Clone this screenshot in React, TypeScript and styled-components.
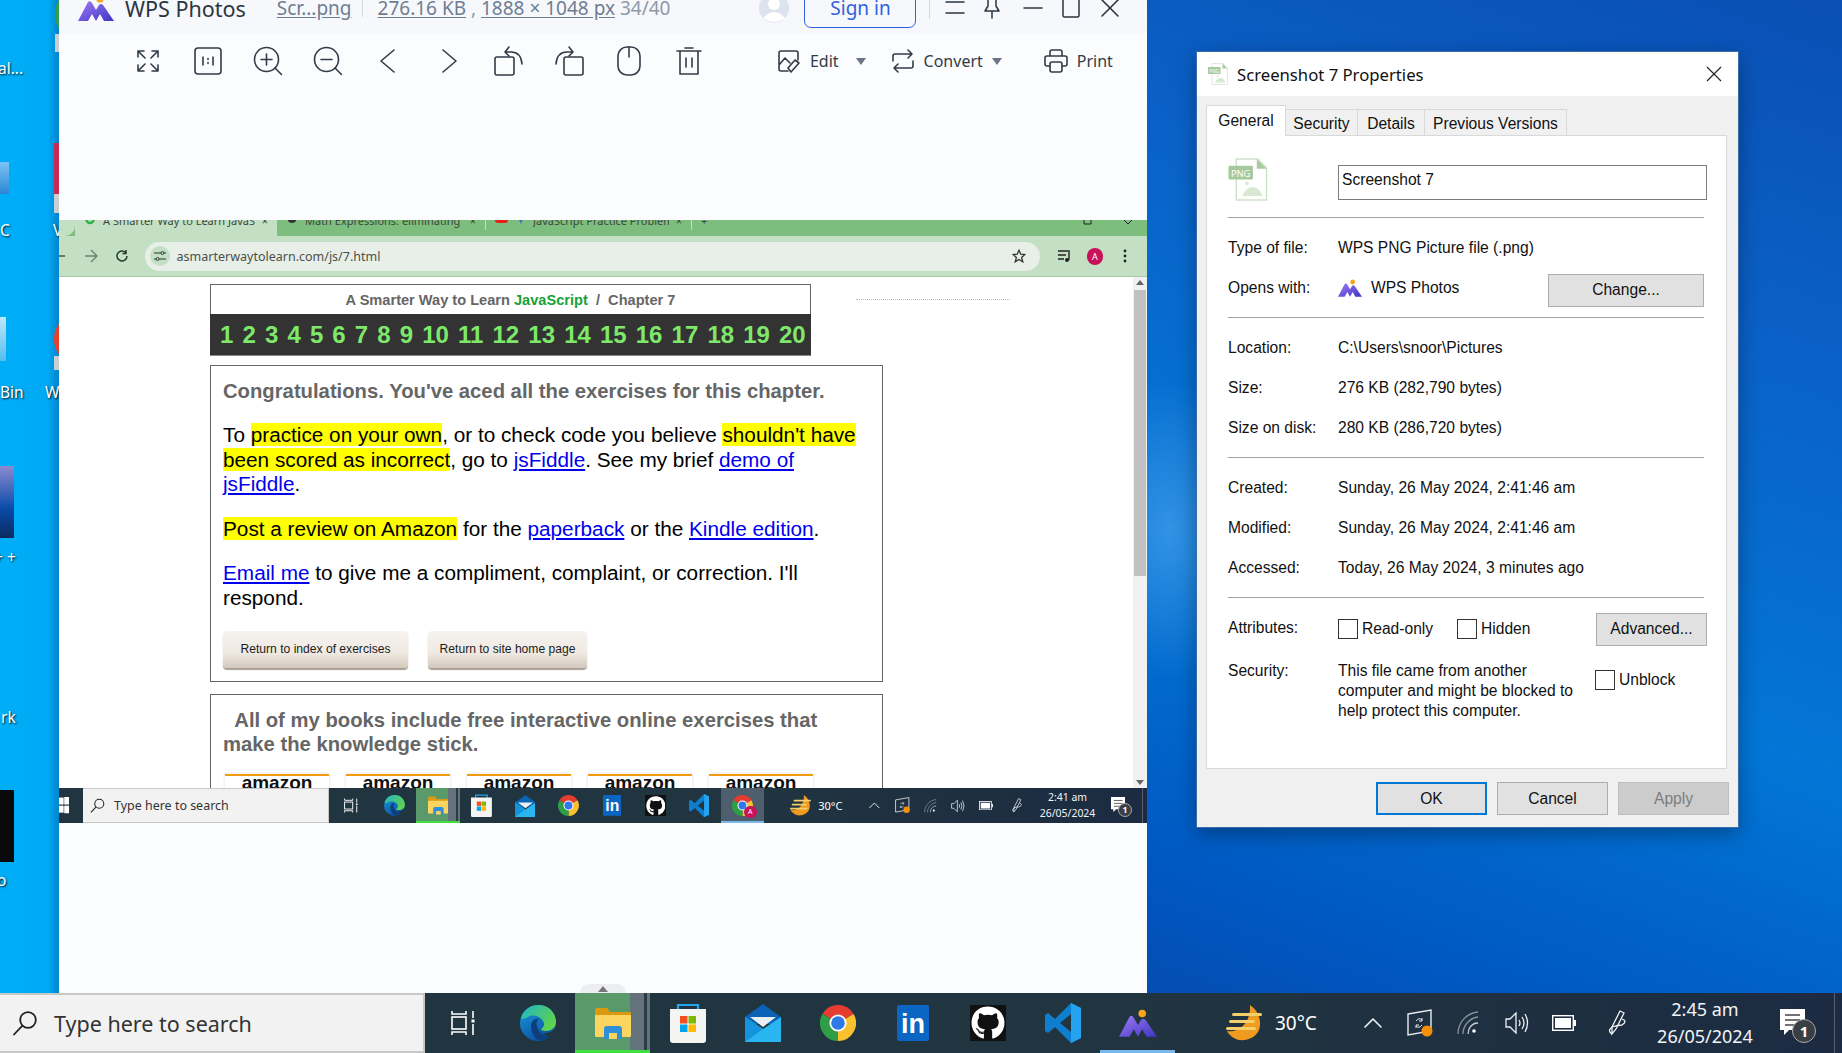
import React from "react";
import styled, { createGlobalStyle } from "styled-components";
import { FaGithub } from "react-icons/fa";

const GlobalStyle = createGlobalStyle`
  html, body { margin: 0; padding: 0; overflow: hidden; }
  * { box-sizing: border-box; }
`;

const Desktop = styled.div`
  position: relative;
  width: 1842px;
  height: 1053px;
  overflow: hidden;
  display: flex;
  flex-direction: column;
  justify-content: flex-end;
  background:
    radial-gradient(ellipse 90px 150px at 1170px 530px, rgba(90, 170, 240, 0.55), transparent),
    linear-gradient(200deg, #0a4fb4 0%, #0a62c8 30%, #0276d6 60%, #0058c2 85%, #0648ac 100%) 1147px 0 / 695px 100% no-repeat,
    linear-gradient(90deg, #00aef8 0, #00a9f3 48px, #0083cc 59px);
`;

/* ---------- desktop shortcuts cut off by the viewer ---------- */

const Shortcut = styled.span<{ $x: number; $y: number }>`
  position: absolute;
  left: ${(p) => p.$x}px;
  top: ${(p) => p.$y}px;
  font: 15.5px "Noto Sans", sans-serif;
  line-height: 18px;
  color: #fff;
  text-shadow: 1px 1px 2px #111;
  white-space: nowrap;
`;

const ShortcutArt = styled.div<{ $x: number; $y: number; $w: number; $h: number; $bg: string; $round?: boolean }>`
  position: absolute;
  left: ${(p) => p.$x}px;
  top: ${(p) => p.$y}px;
  width: ${(p) => p.$w}px;
  height: ${(p) => p.$h}px;
  background: ${(p) => p.$bg};
  border-radius: ${(p) => (p.$round ? "50%" : "0")};
`;

/* ---------- WPS Photos window ---------- */

const Viewer = styled.section`
  position: absolute;
  left: 59px;
  top: -25px;
  width: 1088px;
  height: 1018px;
  background: #fbfcfe;
  display: flex;
  flex-direction: column;
  font-family: "Noto Sans", sans-serif;
`;

const ViewerHeader = styled.header`
  height: 58px;
  padding-top: 8px;
  padding-left: 19px;
  background: #f6f8fb;
  display: flex;
  align-items: center;
  flex-shrink: 0;
  color: #2b3442;
`;

const AppName = styled.span`
  margin: 0 31px 0 11px;
  font-size: 21.5px;
  white-space: nowrap;
`;

const MetaLink = styled.span`
  font-size: 19px;
  color: #6f7d92;
  text-decoration: underline;
  text-underline-offset: 2px;
  white-space: nowrap;
`;

const MetaPlain = styled.span`
  font-size: 19px;
  color: #8e99a9;
  white-space: nowrap;
`;

const MetaRule = styled.span`
  width: 1px;
  height: 18px;
  background: #d5dae2;
  margin: 0 15px 0 10px;
`;

const Avatar = styled.svg`
  margin-left: 89px;
`;

const SignIn = styled.button`
  width: 112px;
  height: 40px;
  margin: 0 13px 0 15px;
  border: 1px solid #2f62e0;
  border-radius: 7px;
  background: transparent;
  color: #2f62e0;
  font: 19px "Noto Sans", sans-serif;
  padding: 0;
`;

const HeaderRule = styled.span`
  width: 1px;
  height: 22px;
  background: #d5dae2;
  margin-right: 10px;
`;

const WindowGlyph = styled.span<{ $w: number }>`
  width: ${(p) => p.$w}px;
  display: flex;
  justify-content: center;
`;

const ViewerTools = styled.div`
  height: 187px;
  padding-top: 8px;
  display: flex;
  align-items: flex-start;
  flex-shrink: 0;
`;

const ToolRow = styled.div`
  height: 40px;
  padding-left: 59px;
  display: flex;
  align-items: center;
`;

const ToolSlot = styled.span`
  width: 60.1px;
  display: flex;
  justify-content: center;
  color: #333b47;
`;

const LabelTool = styled.span<{ $left: number }>`
  margin-left: ${(p) => p.$left}px;
  display: flex;
  align-items: center;
  gap: 9px;
  font-size: 16px;
  color: #333b47;
`;

const Caret = styled.span<{ $gap: number }>`
  width: 0;
  height: 0;
  margin-left: ${(p) => p.$gap}px;
  border-left: 5px solid transparent;
  border-right: 5px solid transparent;
  border-top: 7px solid #6c7684;
`;

const Handle = styled.div`
  position: absolute;
  left: 521px;
  bottom: 0;
  width: 46px;
  height: 9px;
  border-radius: 12px 12px 0 0;
  background: #eceef2;
  display: flex;
  justify-content: center;
  padding-top: 2px;
`;

/* ---------- the Chrome screenshot inside the viewer ---------- */

const Shot = styled.div`
  height: 603px;
  display: flex;
  flex-direction: column;
  flex-shrink: 0;
  overflow: hidden;
  font-family: "Liberation Sans", Arial, sans-serif;
`;

const TabStrip = styled.div`
  height: 16px;
  background: #7dbd7d;
  display: flex;
  overflow: hidden;
  flex-shrink: 0;
  font: 11px "Noto Sans", sans-serif;
  color: #3c4a3c;
`;

const BrowserTab = styled.div<{ $w: number; $active?: boolean }>`
  width: ${(p) => p.$w}px;
  height: 16px;
  display: flex;
  align-items: center;
  gap: 7px;
  padding: 0 9px 16px;
  white-space: nowrap;
  background: ${(p) => (p.$active ? "#c4e0c4" : "transparent")};
  flex-shrink: 0;
`;

const TabTitle = styled.span`
  flex: 1;
  overflow: hidden;
`;

const TabEdge = styled.span`
  width: 16px;
  height: 16px;
  flex-shrink: 0;
  background: #c4e0c4;
  border-radius: 0 0 10px 0;
`;

const TabRule = styled.span`
  width: 1px;
  height: 10px;
  background: #c4e0c4;
  flex-shrink: 0;
`;

const StripControls = styled.div`
  margin-left: auto;
  display: flex;
  gap: 30px;
  padding-right: 14px;
  align-items: flex-start;
`;

const BrowserBar = styled.div`
  height: 41px;
  background: #c4e0c4;
  border-bottom: 1px solid #a9c6a9;
  display: flex;
  align-items: center;
  flex-shrink: 0;
  color: #2c3a2c;
`;

const NavIcon = styled.span<{ $w: number }>`
  width: ${(p) => p.$w}px;
  display: flex;
  justify-content: center;
`;

const Omnibox = styled.div`
  width: 903px;
  height: 29px;
  margin: 0 3px 0 16px;
  border-radius: 15px;
  background: #e8efe8;
  display: flex;
  align-items: center;
  padding: 0 14px 0 5px;
`;

const TuneChip = styled.span`
  width: 20px;
  height: 20px;
  border-radius: 50%;
  background: #c4e0c4;
  display: flex;
  align-items: center;
  justify-content: center;
`;

const UrlText = styled.span`
  margin-left: 7px;
  font: 12.5px "Noto Sans", sans-serif;
  color: #4a4f4a;
  flex: 1;
`;

const ProfileDot = styled.span`
  width: 17px;
  height: 17px;
  border-radius: 50%;
  background: #c9105a;
  color: #fff;
  font: 9px "Noto Sans", sans-serif;
  display: flex;
  align-items: center;
  justify-content: center;
`;

const PageArea = styled.div`
  flex: 1;
  min-height: 0;
  display: flex;
  background: #fff;
  overflow: hidden;
`;

const PageColumn = styled.main`
  width: 673px;
  margin-left: 151px;
  padding-top: 7px;
  flex-shrink: 0;
`;

const ChapterHead = styled.div`
  width: 601px;
  border: 1px solid #666;
  border-bottom: 0;
  height: 30px;
  font-size: 14.6px;
  font-weight: bold;
  color: #666;
  display: flex;
  align-items: center;
  justify-content: center;
  white-space: pre;
`;

const GreenWord = styled.span`
  color: #16a23a;
`;

const ChapterNumbers = styled.nav`
  width: 601px;
  height: 42px;
  background: #333;
  border-bottom: 1px solid #888;
  color: #7ee86a;
  font-size: 24px;
  font-weight: bold;
  display: flex;
  align-items: center;
  justify-content: space-between;
  padding: 0 5px 0 10px;
`;

const PageCard = styled.div`
  border: 1px solid #666;
  padding: 13px 14px 0 12px;
  margin-top: 9px;
  color: #000;
  font-size: 20.75px;
  line-height: 24.3px;
  & + & {
    margin-top: 12px;
  }
`;

const CardHeading = styled.h2`
  margin: 0;
  font-size: 20.25px;
  line-height: 24px;
  color: #666;
  font-weight: bold;
`;

const CardText = styled.p`
  margin: 20.4px 0 0;
`;

const Marked = styled.mark`
  background: #ffff00;
  color: #000;
`;

const PageLink = styled.a`
  color: #0000ee;
  text-decoration: underline;
`;

const PageButtons = styled.div`
  display: flex;
  gap: 20px;
  margin-top: 21px;
  padding-bottom: 13px;
`;

const PageButton = styled.button<{ $w: number }>`
  width: ${(p) => p.$w}px;
  height: 37px;
  padding: 0;
  border: 0;
  border-radius: 4px;
  background: linear-gradient(#f6f3ef, #efe9e2 60%, #d2c8bc);
  box-shadow: 0 2px 1px #a89f94;
  font: 12.1px "Liberation Sans", Arial, sans-serif;
  color: #1c1c1c;
`;

const BookRow = styled.div`
  display: flex;
  gap: 17px;
  margin-top: 18px;
  margin-left: 2px;
`;

const BookLabel = styled.div`
  width: 104px;
  height: 60px;
  border-top: 2px solid #f39c12;
  background: #fff;
  box-shadow: 0 0 3px #ddd;
  text-align: center;
  font-size: 19px;
  font-weight: bold;
  line-height: 14px;
  color: #111;
`;

const DottedAd = styled.div`
  width: 154px;
  height: 0;
  margin: 22px 0 0 -27px;
  border-top: 1px dotted #bbb;
`;

const PageScroll = styled.div`
  margin-left: auto;
  width: 14px;
  background: #f1f1f1;
  display: flex;
  flex-direction: column;
  align-items: center;
  justify-content: space-between;
  padding: 3px 0;
  position: relative;
`;

const ScrollThumb = styled.div`
  position: absolute;
  top: 13px;
  left: 1px;
  width: 12px;
  height: 286px;
  background: #c1c1c1;
`;

/* ---------- taskbar, also used at a smaller size inside the screenshot ---------- */

const Bar = styled.div<{ $compact?: boolean }>`
  height: 60px;
  flex-shrink: 0;
  display: flex;
  align-items: stretch;
  background: linear-gradient(90deg, #213540, #213540 60%, #1c2b42);
  font-family: "Noto Sans", sans-serif;
  color: #fff;
  position: relative;
  zoom: ${(p) => (p.$compact ? 0.58 : 1)};
`;

const StartSlot = styled.div`
  width: 41px;
  display: flex;
  align-items: center;
`;

const SearchBox = styled.div`
  width: 425px;
  background: #f2f2f2;
  border: 1px solid #c8c8c8;
  border-width: 2px 2px 2px 0;
  display: flex;
  align-items: center;
  gap: 16px;
  padding-left: 12px;
  color: #333;
  font-size: 21.5px;
`;

const Slot = styled.div<{ $state?: "explorer" | "active" | "activeTile" }>`
  width: 75px;
  display: flex;
  align-items: center;
  justify-content: center;
  position: relative;
  background: ${(p) =>
    p.$state === "explorer"
      ? "linear-gradient(90deg, #5a9a6a 0 55px, #64727c 55px 69px, #2a3b46 69px 72px, #64727c 72px)"
      : p.$state === "activeTile"
      ? "#4d5f6c"
      : "transparent"};
  &::after {
    content: "";
    display: ${(p) => (p.$state ? "block" : "none")};
    position: absolute;
    left: 0;
    right: 0;
    bottom: 0;
    height: 3px;
    background: ${(p) => (p.$state === "explorer" ? "#3ee03e" : "#78b8ea")};
  }
`;

const ProfileBadge = styled.span`
  position: absolute;
  left: 40px;
  top: 30px;
  width: 22px;
  height: 22px;
  border-radius: 50%;
  background: #c9105a;
  color: #fff;
  font-size: 12px;
  line-height: 22px;
  text-align: center;
`;

const Tray = styled.div`
  margin-left: auto;
  display: flex;
  align-items: center;
`;

const TrayCell = styled.div<{ $w: number }>`
  width: ${(p) => p.$w}px;
  display: flex;
  align-items: center;
  justify-content: center;
  position: relative;
`;

const WeatherCell = styled.div`
  width: 128px;
  padding-left: 4px;
  display: flex;
  align-items: center;
`;

const Temperature = styled.span`
  font-size: 19px;
  margin-left: 13px;
`;

const Clock = styled.div`
  font-size: 18px;
  line-height: 27px;
  text-align: center;
  white-space: nowrap;
  color: #f2f4f6;
`;

const Badge = styled.span`
  position: absolute;
  left: 30px;
  top: 10px;
  width: 24px;
  height: 24px;
  border-radius: 50%;
  background: #3a3f44;
  border: 1px solid #aaa;
  font-size: 15px;
  line-height: 22px;
  text-align: center;
  font-weight: bold;
`;

const BarEnd = styled.div`
  width: 20px;
  align-self: stretch;
  position: relative;
  &::after {
    content: "";
    position: absolute;
    left: 12px;
    top: 0;
    bottom: 0;
    width: 1px;
    background: #556170;
  }
`;

/* ---------- properties dialog ---------- */

const Dialog = styled.section`
  position: absolute;
  left: 1197px;
  top: 52px;
  width: 541px;
  height: 775px;
  background: #f0f0f0;
  box-shadow: 0 0 0 1px #3a6ea8, 0 6px 20px rgba(0, 0, 0, 0.35);
  display: flex;
  flex-direction: column;
  font-family: "Liberation Sans", Arial, sans-serif;
  font-size: 15.6px;
  color: #111;
`;

const DialogTitle = styled.header`
  height: 44px;
  flex-shrink: 0;
  background: #fff;
  display: flex;
  align-items: center;
  padding: 0 16px 0 11px;
  gap: 9px;
  font: 16.7px "Noto Sans", sans-serif;
`;

const CloseBox = styled.span`
  margin-left: auto;
  display: flex;
`;

const DialogBody = styled.div`
  padding: 10px 9px 0 9px;
  flex: 1;
  display: flex;
  flex-direction: column;
`;

const TabRow = styled.div`
  display: flex;
  align-items: flex-end;
  height: 30px;
  position: relative;
  z-index: 1;
  margin-bottom: -1px;
`;

const PropTab = styled.div<{ $w: number; $active?: boolean }>`
  width: ${(p) => p.$w}px;
  height: ${(p) => (p.$active ? 31 : 27)}px;
  border: 1px solid #d9d9d9;
  border-left-width: ${(p) => (p.$active ? 1 : 0)}px;
  border-bottom: ${(p) => (p.$active ? "0" : "1px solid #d9d9d9")};
  background: ${(p) => (p.$active ? "#fff" : "#f0f0f0")};
  display: flex;
  align-items: center;
  justify-content: center;
  padding: ${(p) => (p.$active ? "0 0 1px" : "2px 0 0")};
  flex-shrink: 0;
  white-space: nowrap;
`;

const PropPanel = styled.div`
  width: 521px;
  height: 634px;
  background: #fff;
  border: 1px solid #d9d9d9;
  padding: 0 22px 0 21px;
`;

const PanelTop = styled.div`
  height: 81px;
  display: flex;
  align-items: flex-start;
  padding-top: 22px;
`;

const NameInput = styled.div`
  margin: 7px -3px 0 70px;
  flex: 1;
  height: 35px;
  border: 1px solid #7a7a7a;
  padding: 5px 3px;
  line-height: 18px;
`;

const Rule = styled.hr`
  margin: 0;
  border: 0;
  border-top: 1px solid #a0a0a0;
`;

const Group = styled.div`
  padding: 9px 0 10px;
`;

const Row = styled.div`
  height: 40px;
  padding-top: 2px;
  display: flex;
  align-items: center;
`;

const RowLabel = styled.span`
  width: 110px;
  flex-shrink: 0;
`;

const OpensWith = styled.span`
  display: flex;
  align-items: center;
  gap: 9px;
`;

const DlgButton = styled.button<{ $w: number; $kind?: "default" | "disabled" }>`
  width: ${(p) => p.$w}px;
  height: 33px;
  padding: 0;
  font: 15.6px "Liberation Sans", Arial, sans-serif;
  color: ${(p) => (p.$kind === "disabled" ? "#7d7d7d" : "#111")};
  background: ${(p) => (p.$kind === "disabled" ? "#cccccc" : "#e1e1e1")};
  border: ${(p) =>
    p.$kind === "default"
      ? "2px solid #0078d7"
      : p.$kind === "disabled"
      ? "1px solid #bfbfbf"
      : "1px solid #adadad"};
`;

const ChangeSlot = styled.div`
  margin-left: auto;
  margin-top: 4px;
`;

const CheckLine = styled.label<{ $w?: number }>`
  display: flex;
  align-items: center;
  gap: 4px;
  width: ${(p) => (p.$w ? `${p.$w}px` : "auto")};
  margin-top: 2px;
`;

const CheckSquare = styled.span`
  width: 20px;
  height: 20px;
  background: #fff;
  border: 1px solid #333;
  flex-shrink: 0;
`;

const AdvancedSlot = styled.div`
  margin: 2px -3px 0 auto;
`;

const SecurityRow = styled.div`
  display: flex;
  margin-top: 14px;
  line-height: 20px;
`;

const SecurityNote = styled.div`
  width: 243px;
`;

const UnblockSlot = styled.div`
  margin: 7px 0 0 14px;
`;

const DialogFooter = styled.footer`
  height: 57px;
  display: flex;
  justify-content: flex-end;
  gap: 10px;
  padding-top: 13px;
  flex-shrink: 0;
`;

/* ---------- drawn icons ---------- */

const Line: React.FC<{ size?: number; w?: number; h?: number; sw?: number; children: React.ReactNode }> = ({
  size = 30,
  w,
  h,
  sw = 1.6,
  children,
}) => (
  <svg width={w ?? size} height={h ?? size} viewBox={`0 0 ${w ?? size} ${h ?? size}`} fill="none" stroke="currentColor" strokeWidth={sw} strokeLinecap="round" strokeLinejoin="round">
    {children}
  </svg>
);

const WpsLogo = ({ w = 36, h = 26 }: { w?: number; h?: number }) => (
  <svg width={w} height={h} viewBox="0 0 36 26">
    <defs>
      <linearGradient id="wpsm" x1="0" y1="0" x2="1" y2="1">
        <stop offset="0" stopColor="#a07cf5" />
        <stop offset="1" stopColor="#3e34c4" />
      </linearGradient>
    </defs>
    <circle cx="22" cy="4" r="3.6" fill="#f9a51a" />
    <path d="M0 26 L10 7 Q12 5 14 8 L18 15 L21 10 Q23 8 25 10 L36 26 H26 L22 19 L18 26 L14 19 L10 26Z" fill="url(#wpsm)" />
  </svg>
);

const PngFile = ({ w, h }: { w: number; h: number }) => (
  <svg width={w} height={h} viewBox="0 0 40 44">
    <path d="M8 1 H30 L39 10 V43 H8Z" fill="#fff" stroke="#cfe2cb" strokeWidth="1.4" />
    <path d="M29 1 L39 11 H29Z" fill="#a9cba2" />
    <path d="M14 39 Q18 30 24 30 Q31 29 35 39Z" fill="#d7e9d3" />
    <circle cx="19" cy="26" r="2" fill="#dcebd8" />
    <rect x="0" y="8" width="25" height="14" rx="1" fill="#a5c99d" />
    <text x="12.5" y="19" textAnchor="middle" fontSize="9.5" fill="#fff" fontFamily="Noto Sans, sans-serif">PNG</text>
  </svg>
);

const SearchGlyph = ({ size = 26 }: { size?: number }) => (
  <svg width={size} height={size} viewBox="0 0 26 26" fill="none" stroke="#222" strokeWidth="1.8">
    <circle cx="16" cy="10" r="7.8" />
    <path d="M10.2 15.8 L2 24.5" strokeLinecap="round" />
  </svg>
);

const TaskView = () => (
  <svg width="24" height="26" viewBox="0 0 24 26" fill="none" stroke="#fff" strokeWidth="1.6">
    <path d="M1 1 V4 H15 V1 M1 25 V22 H15 V25" />
    <rect x="1" y="7" width="14" height="12" />
    <path d="M22 1 V8 M22 14 V25" />
    <rect x="20.5" y="9.5" width="3" height="3" fill="#fff" stroke="none" />
  </svg>
);

const EdgeIcon = () => (
  <svg width="36" height="36" viewBox="0 0 36 36">
    <defs>
      <linearGradient id="edgeB" x1="0" y1="0" x2="0.6" y2="1">
        <stop offset="0" stopColor="#1b9de2" />
        <stop offset="1" stopColor="#0b4f9e" />
      </linearGradient>
      <linearGradient id="edgeG" x1="0" y1="0" x2="1" y2="0.6">
        <stop offset="0" stopColor="#1fb5c9" />
        <stop offset="1" stopColor="#5fd34a" />
      </linearGradient>
    </defs>
    <circle cx="18" cy="18" r="18" fill="url(#edgeB)" />
    <path d="M1 13 C4 4 11 0 19 0 C29 0 36 8 36 17 C36 23 31 26 26 26 C23 26 21 25 21 24 C24 22 25 19 23 16 C20 11 13 9 8 12 C5 13.5 2 15 1 13Z" fill="url(#edgeG)" />
    <path d="M11 21 C11 16 15 13 19 14 C15 16 16 24 22 29 C25 31 28 32 30 31 C26 35 21 36 18 35 C14 33 11 27 11 21Z" fill="#0d3f7d" />
    <path d="M23 28 C28 29 33 27 36 22 C35 26 33 30 30 32 C27 32 25 30 23 28Z" fill="#213540" />
  </svg>
);

const FolderIcon = () => (
  <svg width="36" height="32" viewBox="0 0 36 32">
    <path d="M0 3 Q0 1 2 1 H12 L15 5 H36 V10 H0Z" fill="#d99a10" />
    <rect x="0" y="8" width="36" height="22" rx="1" fill="#fbd560" />
    <path d="M9 32 V22 Q9 19 12 19 H24 Q27 19 27 22 V32Z" fill="#2f8fd8" />
    <rect x="14" y="26" width="8" height="6" fill="#fbd560" />
  </svg>
);

const StoreIcon = () => (
  <svg width="36" height="40" viewBox="0 0 36 40">
    <path d="M8 8 V2 H28 V8" fill="none" stroke="#21a8e8" strokeWidth="2.2" />
    <path d="M0 6 H36 V37 Q36 40 33 40 H3 Q0 40 0 37Z" fill="#f4f4f2" />
    <rect x="10" y="13" width="7.5" height="7.5" fill="#f25022" />
    <rect x="18.5" y="13" width="7.5" height="7.5" fill="#7fba00" />
    <rect x="10" y="21.5" width="7.5" height="7.5" fill="#00a4ef" />
    <rect x="18.5" y="21.5" width="7.5" height="7.5" fill="#ffb900" />
  </svg>
);

const MailIcon = () => (
  <svg width="36" height="38" viewBox="0 0 36 38">
    <path d="M0 13 L18 0 L36 13 V20 H0Z" fill="#0b62b4" />
    <path d="M5 13 H31 L18 23Z" fill="#e8eef4" />
    <path d="M0 13 L18 25 L36 13 V38 H0Z" fill="#29b6f0" />
    <path d="M0 38 L18 25 L0 13Z" fill="#1394dc" />
  </svg>
);

const ChromeIcon = () => (
  <svg width="36" height="36" viewBox="0 0 36 36">
    <path d="M18 18 L2.4 9 A18 18 0 0 1 33.6 9Z" fill="#e53b30" />
    <path d="M18 18 L33.6 9 A18 18 0 0 1 18 36Z" fill="#fbc02d" />
    <path d="M18 18 L18 36 A18 18 0 0 1 2.4 9Z" fill="#2e9e46" />
    <circle cx="18" cy="18" r="8.6" fill="#fff" />
    <circle cx="18" cy="18" r="6.8" fill="#2f78e8" />
  </svg>
);

const LinkedInIcon = () => (
  <svg width="32" height="36" viewBox="0 0 32 36">
    <rect width="32" height="36" rx="2" fill="#0a66c2" />
    <text x="16" y="28" textAnchor="middle" fontSize="27" fontWeight="bold" fill="#fff" fontFamily="Liberation Sans, sans-serif">in</text>
  </svg>
);

const GithubTile = styled.span`
  width: 36px;
  height: 36px;
  background: #111;
  display: flex;
  align-items: center;
  justify-content: center;
  color: #fff;
`;

const VsCodeIcon = () => (
  <svg width="36" height="40" viewBox="0 0 36 40">
    <path d="M26 0 L36 5 V35 L26 40 L10 24 L3 30 L0 28 V12 L3 10 L10 16Z M26 11 L15 20 L26 29Z" fill="#0e7fd0" fillRule="evenodd" />
    <path d="M26 0 L36 5 V35 L26 40Z" fill="#24a3ee" />
  </svg>
);

const WeatherIcon = () => (
  <svg width="36" height="36" viewBox="0 0 36 36">
    <path d="M24 0 C33 6 36 17 33 25 C30 32 22 36 13 35 C8 34 3 30 1 26 C13 28 25 18 24 0Z" fill="#f09a20" />
    <g fill="#f4cf6a">
      <rect x="6" y="8" width="30" height="3" rx="1.5" />
      <rect x="3" y="15" width="26" height="3" rx="1.5" />
      <rect x="0" y="22" width="30" height="3" rx="1.5" />
    </g>
  </svg>
);

const SecurityIcon = () => (
  <svg width="26" height="28" viewBox="0 0 26 28" fill="none" stroke="#e8ecef" strokeWidth="1.4">
    <path d="M1 5 L24 1 V22 L1 26Z" />
    <path d="M9 12 Q12 8 15 11 M15 9 V12 H12 M15 16 Q12 20 9 17 M9 19 V16 H12" strokeWidth="1" />
    <circle cx="20" cy="22" r="5.5" fill="#f79009" stroke="none" />
  </svg>
);

const WifiIcon = () => (
  <svg width="24" height="24" viewBox="0 0 24 24" fill="none" stroke="#8a949c" strokeWidth="1.3">
    <path d="M1 23 C1 11 10 2 21 1" />
    <path d="M6 23 C6 14 13 7 21 6" />
    <path d="M11 23 C11 17 15 12 21 12" stroke="#c8ced2" />
    <circle cx="17" cy="20" r="1.8" fill="#fff" stroke="none" />
  </svg>
);

const VolumeIcon = () => (
  <svg width="24" height="24" viewBox="0 0 24 24" fill="none" stroke="#eef1f3" strokeWidth="1.3">
    <path d="M1 8 H5 L11 2 V22 L5 16 H1Z" />
    <path d="M14 9 Q16 12 14 15 M17 6 Q21 12 17 18 M20 3 Q25 12 20 21" />
  </svg>
);

const BatteryIcon = () => (
  <svg width="24" height="16" viewBox="0 0 24 16">
    <rect x="0.7" y="0.7" width="20.6" height="14.6" fill="none" stroke="#fff" strokeWidth="1.4" />
    <rect x="3" y="3" width="16" height="10" fill="#fff" />
    <rect x="22" y="5" width="2" height="6" fill="#fff" />
  </svg>
);

const PenIcon = () => (
  <svg width="22" height="26" viewBox="0 0 22 26" fill="none" stroke="#eef1f3" strokeWidth="1.3">
    <path d="M13 1 L17 3 L9 19 L5 24 L5 17Z" />
    <path d="M15 9 Q21 11 15 15 Q11 15 5 17 Q0 21 5 24" />
  </svg>
);

const NoteIcon = () => (
  <svg width="25" height="28" viewBox="0 0 25 28">
    <path d="M0 0 H25 V21 H9 L4 26 V21 H0Z" fill="#fff" />
    <path d="M5 6 H20 M5 11 H20 M5 16 H16" stroke="#444" strokeWidth="1.4" />
  </svg>
);

const WindowsIcon = () => (
  <svg width="18" height="28" viewBox="0 0 18 28" fill="#fff">
    <rect x="0" y="1" width="8" height="12" />
    <rect x="9" y="0" width="9" height="13" />
    <rect x="0" y="15" width="8" height="12" />
    <rect x="9" y="15" width="9" height="13" />
  </svg>
);

const Taskbar = ({ compact, time }: { compact?: boolean; time: string }) => (
  <Bar $compact={compact}>
    {compact && (
      <StartSlot>
        <WindowsIcon />
      </StartSlot>
    )}
    <SearchBox>
      <SearchGlyph />
      <span>Type here to search</span>
    </SearchBox>
    <Slot><TaskView /></Slot>
    <Slot><EdgeIcon /></Slot>
    <Slot $state="explorer"><FolderIcon /></Slot>
    <Slot><StoreIcon /></Slot>
    <Slot><MailIcon /></Slot>
    <Slot><ChromeIcon /></Slot>
    <Slot><LinkedInIcon /></Slot>
    <Slot><GithubTile><FaGithub size={34} /></GithubTile></Slot>
    <Slot><VsCodeIcon /></Slot>
    {compact ? (
      <Slot $state="activeTile">
        <ChromeIcon />
        <ProfileBadge>A</ProfileBadge>
      </Slot>
    ) : (
      <Slot $state="active"><WpsLogo w={38} h={28} /></Slot>
    )}
    <Tray>
      <WeatherCell>
        <WeatherIcon />
        <Temperature>30°C</Temperature>
      </WeatherCell>
      <TrayCell $w={45}>
        <Line size={22} sw={1.6}><path d="M3 15 L11 7 L19 15" stroke="#f1f3f5" /></Line>
      </TrayCell>
      <TrayCell $w={50}><SecurityIcon /></TrayCell>
      <TrayCell $w={48}><WifiIcon /></TrayCell>
      <TrayCell $w={47}><VolumeIcon /></TrayCell>
      <TrayCell $w={48}><BatteryIcon /></TrayCell>
      <TrayCell $w={60}><PenIcon /></TrayCell>
      <TrayCell $w={114}>
        <Clock>
          {time}
          <br />
          26/05/2024
        </Clock>
      </TrayCell>
      <TrayCell $w={60}>
        <NoteIcon />
        <Badge>1</Badge>
      </TrayCell>
      <BarEnd />
    </Tray>
  </Bar>
);

const toolbarIcons: React.ReactNode[] = [
  <Line key="fit" size={26}><path d="M3 3 L10 10 M3 3 H9 M3 3 V9 M23 3 L16 10 M23 3 H17 M23 3 V9 M3 23 L10 16 M3 23 H9 M3 23 V17 M23 23 L16 16 M23 23 H17 M23 23 V17" /></Line>,
  <Line key="one" size={28}><rect x="1" y="1" width="26" height="26" rx="3" /><path d="M9 10 V18 M19 10 V18 M14 11.5 V12.5 M14 15.5 V16.5" /></Line>,
  <Line key="in" size={30}><circle cx="13.5" cy="13.5" r="12" /><path d="M8 13.5 H19 M13.5 8 V19 M22 22 L28.5 28.5" /></Line>,
  <Line key="out" size={30}><circle cx="13.5" cy="13.5" r="12" /><path d="M8 13.5 H19 M22 22 L28.5 28.5" /></Line>,
  <Line key="prev" size={26}><path d="M19 2 L6 13 L19 24" /></Line>,
  <Line key="next" size={26}><path d="M7 2 L20 13 L7 24" /></Line>,
  <Line key="ccw" size={30}><rect x="1" y="11" width="19" height="18" rx="2" /><path d="M12 6 H17 Q27 6 28 18 M15 1 L11 6 L15 10" /></Line>,
  <Line key="cw" size={30}><rect x="10" y="11" width="19" height="18" rx="2" /><path d="M18 6 H13 Q3 6 2 18 M15 1 L19 6 L15 10" /></Line>,
  <Line key="mouse" size={30} w={24}><rect x="1" y="1" width="22" height="28" rx="9" /><path d="M12 1 V11" /></Line>,
  <Line key="trash" size={30} w={26}><path d="M1 5 H25 M9 2 H17 M4 5 V28 H22 V5 M10 12 V21 M16 12 V21" /></Line>,
];

const EditIcon = () => (
  <Line size={24}><path d="M11 22 H4 Q2 22 2 20 V4 Q2 2 4 2 H19 Q21 2 21 4 V11 M2 16 L8 9 L13 14" /><path d="M14 23 L22 14 L18 11 L11 19 Z" /></Line>
);

const ConvertIcon = () => (
  <Line size={24}><path d="M2 12 V7 Q2 5 4 5 H21 M17 1 L21 5 L17 9 M22 12 V17 Q22 19 20 19 H3 M7 15 L3 19 L7 23" /></Line>
);

const PrintIcon = () => (
  <Line size={24}><path d="M6 17 H3 Q1 17 1 15 V9 Q1 7 3 7 H21 Q23 7 23 9 V15 Q23 17 21 17 H18 M6 7 V3 Q6 1 8 1 H16 Q18 1 18 3 V7" /><rect x="6" y="13" width="12" height="10" rx="2" /></Line>
);

const chapters = Array.from({ length: 20 }, (_, i) => i + 1);
const infoRows: [string, string][][] = [
  [
    ["Location:", "C:\\Users\\snoor\\Pictures"],
    ["Size:", "276 KB (282,790 bytes)"],
    ["Size on disk:", "280 KB (286,720 bytes)"],
  ],
  [
    ["Created:", "Sunday, 26 May 2024, 2:41:46 am"],
    ["Modified:", "Sunday, 26 May 2024, 2:41:46 am"],
    ["Accessed:", "Today, 26 May 2024, 3 minutes ago"],
  ],
];

export default function App() {
  return (
    <Desktop>
      <GlobalStyle />
      <Shortcut $x={-2} $y={59}>al...</Shortcut>
      <ShortcutArt $x={-8} $y={162} $w={17} $h={32} $bg="linear-gradient(#7cc4f5, #2a86d6)" />
      <Shortcut $x={0} $y={221}>C</Shortcut>
      <Shortcut $x={53} $y={221}>V</Shortcut>
      <ShortcutArt $x={-10} $y={317} $w={16} $h={44} $bg="linear-gradient(#bfe6f8, #55bdf0)" />
      <Shortcut $x={0} $y={383}>Bin</Shortcut>
      <Shortcut $x={45} $y={383}>W</Shortcut>
      <ShortcutArt $x={-10} $y={466} $w={24} $h={72} $bg="linear-gradient(#8a8ad0, #0a4aa8 60%, #0c2a60)" />
      <Shortcut $x={-6} $y={548}>+ +</Shortcut>
      <Shortcut $x={1} $y={708}>rk</Shortcut>
      <ShortcutArt $x={-10} $y={790} $w={24} $h={72} $bg="#0a0a0a" />
      <Shortcut $x={-3} $y={871}>o</Shortcut>
      <ShortcutArt $x={55} $y={-8} $w={30} $h={44} $bg="#2f9e4f" $round />
      <ShortcutArt $x={55} $y={34} $w={6} $h={18} $bg="#c9ced3" />
      <ShortcutArt $x={54} $y={143} $w={6} $h={51} $bg="#c72a55" />
      <ShortcutArt $x={54} $y={194} $w={6} $h={19} $bg="#c9ced3" />
      <ShortcutArt $x={54} $y={319} $w={30} $h={40} $bg="#e8402a" $round />
      <ShortcutArt $x={54} $y={356} $w={6} $h={14} $bg="#c9ced3" />

      <Viewer>
        <ViewerHeader>
          <WpsLogo />
          <AppName>WPS Photos</AppName>
          <MetaLink>Scr...png</MetaLink>
          <MetaRule />
          <MetaLink>276.16 KB</MetaLink>
          <MetaPlain>&nbsp;,&nbsp;</MetaPlain>
          <MetaLink>1888 × 1048 px</MetaLink>
          <MetaPlain>&nbsp;34/40</MetaPlain>
          <Avatar width="30" height="30" viewBox="0 0 30 30">
            <circle cx="15" cy="15" r="15" fill="#dde3ee" />
            <circle cx="15" cy="11" r="6" fill="#fff" />
            <path d="M4 25 Q15 13 26 25 Q15 33 4 25Z" fill="#fff" />
          </Avatar>
          <SignIn>Sign in</SignIn>
          <HeaderRule />
          <WindowGlyph $w={30}><Line w={20} h={16} sw={1.5}><path d="M1 2 H19 M1 13 H19" /></Line></WindowGlyph>
          <WindowGlyph $w={44}><Line w={18} h={22} sw={1.5}><path d="M5 1 V9 L2 14 H16 L13 9 V1 M9 14 V21" /></Line></WindowGlyph>
          <WindowGlyph $w={38}><Line w={20} h={4} sw={1.5}><path d="M1 2 H19" /></Line></WindowGlyph>
          <WindowGlyph $w={38}><Line w={20} h={20} sw={1.5}><rect x="2" y="1" width="16" height="18" rx="1.5" /></Line></WindowGlyph>
          <WindowGlyph $w={40}><Line w={20} h={20} sw={1.6}><path d="M2 2 L18 18 M18 2 L2 18" /></Line></WindowGlyph>
        </ViewerHeader>

        <ViewerTools>
          <ToolRow>
            {toolbarIcons.map((icon, i) => (
              <ToolSlot key={i}>{icon}</ToolSlot>
            ))}
            <LabelTool $left={58}><EditIcon />Edit</LabelTool>
            <Caret $gap={17} />
            <LabelTool $left={25}><ConvertIcon />Convert</LabelTool>
            <Caret $gap={9} />
            <LabelTool $left={42}><PrintIcon />Print</LabelTool>
          </ToolRow>
        </ViewerTools>

        <Shot>
          <TabStrip>
            <TabEdge />
            <BrowserTab $w={202} $active>
              <svg width="12" height="10" viewBox="0 0 12 10"><path d="M1 0 Q2 8 6 8 Q10 8 11 0" fill="none" stroke="#2fb344" strokeWidth="2.4" /></svg>
              <TabTitle>A Smarter Way to Learn JavaScr</TabTitle>
              <span>×</span>
            </BrowserTab>
            <BrowserTab $w={208}>
              <svg width="12" height="8" viewBox="0 0 12 8"><path d="M1 0 Q1 7 6 7 Q11 7 11 0Z" fill="#333" /></svg>
              <TabTitle>Math Expressions: eliminating c</TabTitle>
              <span>×</span>
            </BrowserTab>
            <TabRule />
            <BrowserTab $w={205}>
              <svg width="13" height="6" viewBox="0 0 13 6"><path d="M0 0 H13 V3 Q13 6 10 6 H3 Q0 6 0 3Z" fill="#e62117" /></svg>
              <svg width="11" height="8" viewBox="0 0 11 8"><path d="M2 0 L9 0 L6 8Z" fill="#3b6fd4" /></svg>
              <TabTitle>JavaScript Practice Problem</TabTitle>
              <span>×</span>
            </BrowserTab>
            <TabRule />
            <BrowserTab $w={30}>+</BrowserTab>
            <StripControls>
              <svg width="10" height="5" viewBox="0 0 10 5"><path d="M1 0 V4 H8 V0" fill="none" stroke="#222" /></svg>
              <svg width="10" height="5" viewBox="0 0 10 5"><path d="M1 0 L5 4 L9 0" fill="none" stroke="#222" /></svg>
            </StripControls>
          </TabStrip>
          <BrowserBar>
            <NavIcon $w={8}><svg width="8" height="14" viewBox="8 0 8 14"><path d="M1 7 H14 M7 1 L1 7 L7 13" fill="none" stroke="#4a5a4a" strokeWidth="1.4" /></svg></NavIcon>
            <NavIcon $w={48}><svg width="14" height="14" viewBox="0 0 14 14"><path d="M1 7 H13 M7 1 L13 7 L7 13" fill="none" stroke="#6d816d" strokeWidth="1.4" /></svg></NavIcon>
            <NavIcon $w={14}><svg width="14" height="14" viewBox="0 0 14 14"><path d="M12 7 A5 5 0 1 1 10.5 3.4 M11 1 V4.5 H7.5" fill="none" stroke="#2c3a2c" strokeWidth="1.5" /></svg></NavIcon>
            <Omnibox>
              <TuneChip>
                <svg width="12" height="12" viewBox="0 0 12 12"><path d="M0 3 H7 M10 3 H12 M0 9 H2 M5 9 H12" stroke="#333" strokeWidth="1.2" /><circle cx="8.5" cy="3" r="1.5" fill="none" stroke="#333" /><circle cx="3.5" cy="9" r="1.5" fill="none" stroke="#333" /></svg>
              </TuneChip>
              <UrlText>asmarterwaytolearn.com/js/7.html</UrlText>
              <svg width="14" height="14" viewBox="0 0 24 24"><path d="M12 2 L15 9 L22 9.5 L16.5 14.5 L18.5 22 L12 18 L5.5 22 L7.5 14.5 L2 9.5 L9 9Z" fill="none" stroke="#333" strokeWidth="2.2" /></svg>
            </Omnibox>
            <NavIcon $w={44}>
              <svg width="14" height="14" viewBox="0 0 14 14"><path d="M0 2 H10 M0 6 H8 M0 10 H6" stroke="#222" strokeWidth="1.6" /><path d="M11 1 V11" stroke="#222" strokeWidth="1.4" /><circle cx="9" cy="11" r="2" fill="#222" /></svg>
            </NavIcon>
            <ProfileDot>A</ProfileDot>
            <NavIcon $w={44}>
              <svg width="4" height="14" viewBox="0 0 4 14"><circle cx="2" cy="2" r="1.4" fill="#222" /><circle cx="2" cy="7" r="1.4" fill="#222" /><circle cx="2" cy="12" r="1.4" fill="#222" /></svg>
            </NavIcon>
          </BrowserBar>
          <PageArea>
            <PageColumn>
              <ChapterHead>
                A Smarter Way to Learn <GreenWord>JavaScript</GreenWord>  /  Chapter 7
              </ChapterHead>
              <ChapterNumbers>
                {chapters.map((n) => (
                  <span key={n}>{n}</span>
                ))}
              </ChapterNumbers>
              <PageCard>
                <CardHeading>Congratulations. You've aced all the exercises for this chapter.</CardHeading>
                <CardText>
                  To <Marked>practice on your own</Marked>, or to check code you believe{" "}
                  <Marked>shouldn't have been scored as incorrect</Marked>, go to <PageLink>jsFiddle</PageLink>. See my
                  brief <PageLink>demo of jsFiddle</PageLink>.
                </CardText>
                <CardText>
                  <Marked>Post a review on Amazon</Marked> for the <PageLink>paperback</PageLink> or the{" "}
                  <PageLink>Kindle edition</PageLink>.
                </CardText>
                <CardText>
                  <PageLink>Email me</PageLink> to give me a compliment, complaint, or correction. I'll respond.
                </CardText>
                <PageButtons>
                  <PageButton $w={185}>Return to index of exercises</PageButton>
                  <PageButton $w={159}>Return to site home page</PageButton>
                </PageButtons>
              </PageCard>
              <PageCard>
                <CardHeading>&nbsp;&nbsp;All of my books include free interactive online exercises that make the knowledge stick.</CardHeading>
                <BookRow>
                  {[1, 2, 3, 4, 5].map((n) => (
                    <BookLabel key={n}>amazon</BookLabel>
                  ))}
                </BookRow>
              </PageCard>
            </PageColumn>
            <DottedAd />
            <PageScroll>
              <svg width="8" height="5" viewBox="0 0 8 5"><path d="M4 0 L8 5 H0Z" fill="#666" /></svg>
              <ScrollThumb />
              <svg width="8" height="5" viewBox="0 0 8 5"><path d="M0 0 H8 L4 5Z" fill="#666" /></svg>
            </PageScroll>
          </PageArea>
          <Taskbar compact time="2:41 am" />
        </Shot>
        <Handle>
          <svg width="10" height="6" viewBox="0 0 10 6"><path d="M5 0 L10 6 H0Z" fill="#777" /></svg>
        </Handle>
      </Viewer>

      <Dialog>
        <DialogTitle>
          <PngFile w={20} h={22} />
          Screenshot 7 Properties
          <CloseBox>
            <svg width="16" height="16" viewBox="0 0 16 16"><path d="M1 1 L15 15 M15 1 L1 15" stroke="#222" strokeWidth="1.2" /></svg>
          </CloseBox>
        </DialogTitle>
        <DialogBody>
          <TabRow>
            <PropTab $w={80} $active>General</PropTab>
            <PropTab $w={72}>Security</PropTab>
            <PropTab $w={67}>Details</PropTab>
            <PropTab $w={142}>Previous Versions</PropTab>
          </TabRow>
          <PropPanel>
            <PanelTop>
              <PngFile w={40} h={43} />
              <NameInput>Screenshot 7</NameInput>
            </PanelTop>
            <Rule />
            <Group>
              <Row>
                <RowLabel>Type of file:</RowLabel>
                <span>WPS PNG Picture file (.png)</span>
              </Row>
              <Row>
                <RowLabel>Opens with:</RowLabel>
                <OpensWith>
                  <WpsLogo w={24} h={18} />
                  WPS Photos
                </OpensWith>
                <ChangeSlot>
                  <DlgButton $w={156}>Change...</DlgButton>
                </ChangeSlot>
              </Row>
            </Group>
            {infoRows.map((group, i) => (
              <React.Fragment key={i}>
                <Rule />
                <Group>
                  {group.map(([label, value]) => (
                    <Row key={label}>
                      <RowLabel>{label}</RowLabel>
                      <span>{value}</span>
                    </Row>
                  ))}
                </Group>
              </React.Fragment>
            ))}
            <Rule />
            <Group>
              <Row>
                <RowLabel>Attributes:</RowLabel>
                <CheckLine $w={119}>
                  <CheckSquare />
                  Read-only
                </CheckLine>
                <CheckLine>
                  <CheckSquare />
                  Hidden
                </CheckLine>
                <AdvancedSlot>
                  <DlgButton $w={111}>Advanced...</DlgButton>
                </AdvancedSlot>
              </Row>
              <SecurityRow>
                <RowLabel>Security:</RowLabel>
                <SecurityNote>
                  This file came from another computer and might be blocked to help protect this computer.
                </SecurityNote>
                <UnblockSlot>
                  <CheckLine>
                    <CheckSquare />
                    Unblock
                  </CheckLine>
                </UnblockSlot>
              </SecurityRow>
            </Group>
          </PropPanel>
          <DialogFooter>
            <DlgButton $w={111} $kind="default">OK</DlgButton>
            <DlgButton $w={111}>Cancel</DlgButton>
            <DlgButton $w={111} $kind="disabled">Apply</DlgButton>
          </DialogFooter>
        </DialogBody>
      </Dialog>

      <Taskbar time="2:45 am" />
    </Desktop>
  );
}
